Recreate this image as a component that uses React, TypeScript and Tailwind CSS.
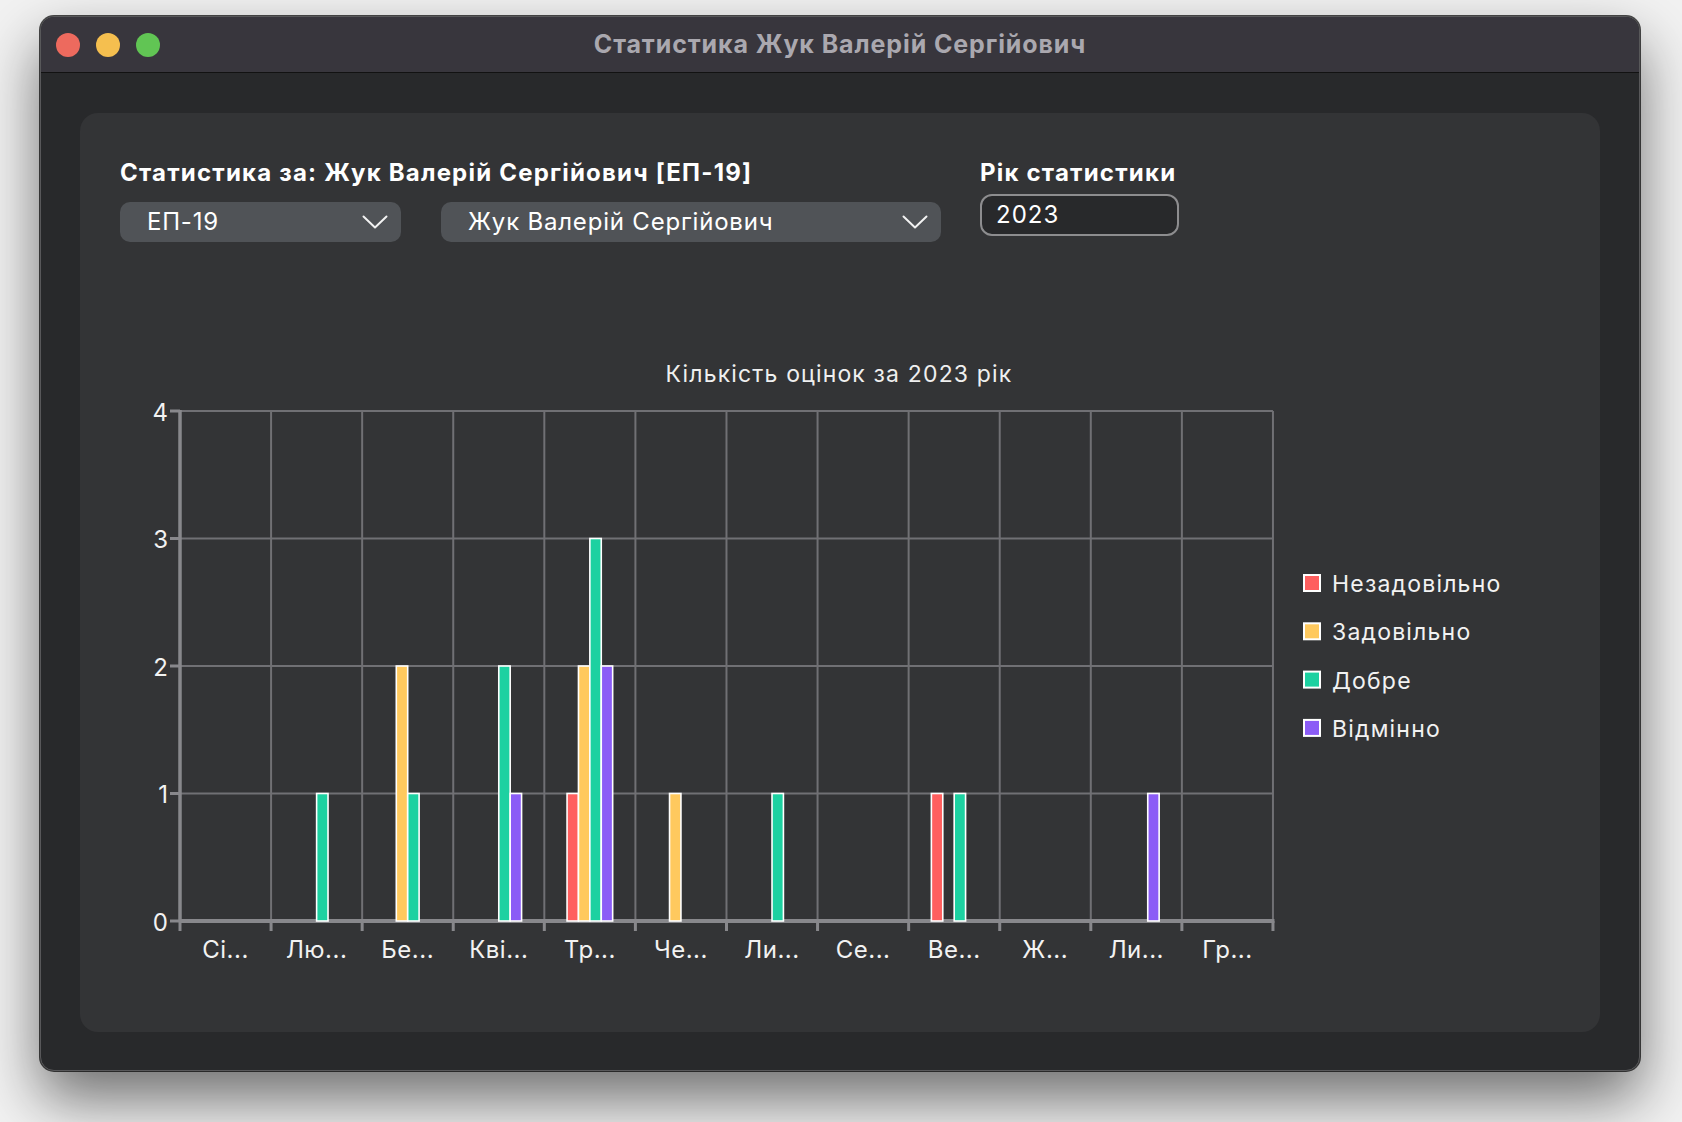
import React from "react";

const months = ["Сі...", "Лю...", "Бе...", "Кві...", "Тр...", "Че...", "Ли...", "Се...", "Ве...", "Ж...", "Ли...", "Гр..."];
// [red, yellow, green, purple]
const data: number[][] = [
  [0, 0, 0, 0],
  [0, 0, 1, 0],
  [0, 2, 1, 0],
  [0, 0, 2, 1],
  [1, 2, 3, 2],
  [0, 1, 0, 0],
  [0, 0, 1, 0],
  [0, 0, 0, 0],
  [1, 0, 1, 0],
  [0, 0, 0, 0],
  [0, 0, 0, 1],
  [0, 0, 0, 0],
];
const colors = ["#ff5f5f", "#ffc95e", "#1dd1a1", "#8b5cf6"];
const legend = ["Незадовільно", "Задовільно", "Добре", "Відмінно"];

const X0 = 180;
const STEP = 91.08;
const Y0 = 921;
const UNIT = 127.5;
const BW = 11.4;
const FONT = "Inter, 'Noto Sans', sans-serif";

function Chevron() {
  return (
    <svg width="26" height="14" viewBox="0 0 26 14" fill="none">
      <polyline points="1.5,1.5 13,12.5 24.5,1.5" stroke="#f2f2f2" strokeWidth="2" strokeLinecap="round" strokeLinejoin="round" />
    </svg>
  );
}

function Chart() {
  const right = X0 + STEP * 12;
  const top = Y0 - UNIT * 4;
  return (
    <svg width="1440" height="660" className="block" style={{ fontFamily: FONT }}>
      <g transform="translate(-120,-330)">
        <text x="839" y="374" textAnchor="middle" dominantBaseline="central" fontSize="23" letterSpacing="1.15" fill="#efefef">
          Кількість оцінок за 2023 рік
        </text>
        {[1, 2, 3, 4].map((k) => (
          <line key={"h" + k} x1={X0} x2={right} y1={Y0 - k * UNIT} y2={Y0 - k * UNIT} stroke="#707074" strokeWidth="2" />
        ))}
        {Array.from({ length: 12 }, (_, i) => i + 1).map((i) => (
          <line key={"v" + i} x1={X0 + i * STEP} x2={X0 + i * STEP} y1={top} y2={Y0} stroke="#707074" strokeWidth="2" />
        ))}
        {[0, 1, 2, 3, 4].map((k) => (
          <g key={"yt" + k}>
            <line x1={170} x2={X0} y1={Y0 - k * UNIT} y2={Y0 - k * UNIT} stroke="#88888c" strokeWidth="3" />
            <text x="168" y={Y0 - k * UNIT + 1} textAnchor="end" dominantBaseline="central" fontSize="24" fill="#f2f2f2">
              {k}
            </text>
          </g>
        ))}
        {Array.from({ length: 13 }, (_, i) => i).map((i) => (
          <line key={"xt" + i} x1={X0 + i * STEP} x2={X0 + i * STEP} y1={Y0} y2={Y0 + 10} stroke="#88888c" strokeWidth="3" />
        ))}
        <line x1={X0} x2={X0} y1={top - 1} y2={Y0} stroke="#88888c" strokeWidth="3.5" />
        <line x1={X0} x2={right + 1.5} y1={Y0} y2={Y0} stroke="#88888c" strokeWidth="4" />
        {data.map((vals, m) => {
          const cx = X0 + m * STEP + STEP / 2;
          return vals.map((v, s) =>
            v > 0 ? (
              <rect
                key={m + "-" + s}
                x={cx + (s - 2) * BW}
                y={Y0 - v * UNIT}
                width={BW}
                height={v * UNIT}
                fill={colors[s]}
                stroke="#ffffff"
                strokeWidth="1.6"
              />
            ) : null
          );
        })}
        {months.map((m, i) => (
          <text key={"xl" + i} x={X0 + i * STEP + STEP / 2} y="949" textAnchor="middle" dominantBaseline="central" fontSize="24" letterSpacing="0.5" fill="#f2f2f2">
            {m}
          </text>
        ))}
        {legend.map((l, i) => (
          <g key={"lg" + i}>
            <rect x="1304" y={575 + i * 48.3} width="16" height="16" fill={colors[i]} stroke="#ffffff" strokeWidth="2" />
            <text x="1332" y={584 + i * 48.3} dominantBaseline="central" fontSize="23" letterSpacing="1.2" fill="#f2f2f2">
              {l}
            </text>
          </g>
        ))}
      </g>
    </svg>
  );
}

export default function App() {
  return (
    <div className="w-[1682px] h-[1122px] bg-[#f2f2f2] pt-[16px] pl-[40px] overflow-hidden" style={{ fontFamily: FONT }}>
      <div className="w-[1600px] h-[1055px] rounded-[14px] bg-[#28292b] border border-[#58585a] shadow-[0_0_0_1px_rgba(0,0,0,0.7),0_28px_60px_rgba(0,0,0,0.55)] overflow-hidden flex flex-col">
        <div className="h-[56px] shrink-0 bg-[#38363d] border-b border-[#121212] grid grid-cols-[1fr_auto_1fr] items-center">
          <div className="flex items-center gap-[16px] pl-[15px]">
            <div className="w-[24px] h-[24px] rounded-full bg-[#ed6a5e]" />
            <div className="w-[24px] h-[24px] rounded-full bg-[#f5bf4f]" />
            <div className="w-[24px] h-[24px] rounded-full bg-[#61c554]" />
          </div>
          <div className="text-[25px] font-bold text-[#aaa8af] tracking-[0.9px]">
            Статистика Жук Валерій Сергійович
          </div>
          <div />
        </div>
        <div className="flex-1 pl-[39px] pt-[40px]">
          <div className="w-[1520px] h-[919px] rounded-[18px] bg-[#333436] pl-[40px] pt-[44px]">
            <div className="flex items-start">
              <div className="w-[821px] flex flex-col">
                <div className="text-[24px] leading-[32px] font-bold text-white tracking-[1.2px]">Статистика за: Жук Валерій Сергійович [ЕП-19]</div>
                <div className="flex gap-[40px] mt-[13px]">
                  <div className="w-[281px] h-[40px] rounded-[10px] bg-[#505357] flex items-center justify-between pl-[27px] pr-[13px]">
                    <span className="text-[24px] text-white tracking-[0.8px]">ЕП-19</span>
                    <Chevron />
                  </div>
                  <div className="w-[500px] h-[40px] rounded-[10px] bg-[#505357] flex items-center justify-between pl-[27px] pr-[13px]">
                    <span className="text-[24px] text-white tracking-[0.8px]">Жук Валерій Сергійович</span>
                    <Chevron />
                  </div>
                </div>
              </div>
              <div className="ml-[39px] flex flex-col">
                <div className="text-[24px] leading-[32px] font-bold text-white tracking-[1.2px]">Рік статистики</div>
                <div className="mt-[5px] w-[199px] h-[42px] rounded-[12px] border-2 border-[#8d8d8f] bg-[#28292b] flex items-center pl-[14px]">
                  <span className="text-[24px] text-white tracking-[1px]">2023</span>
                </div>
              </div>
            </div>
            <div className="mt-[88px]">
              <Chart />
            </div>
          </div>
        </div>
      </div>
    </div>
  );
}
